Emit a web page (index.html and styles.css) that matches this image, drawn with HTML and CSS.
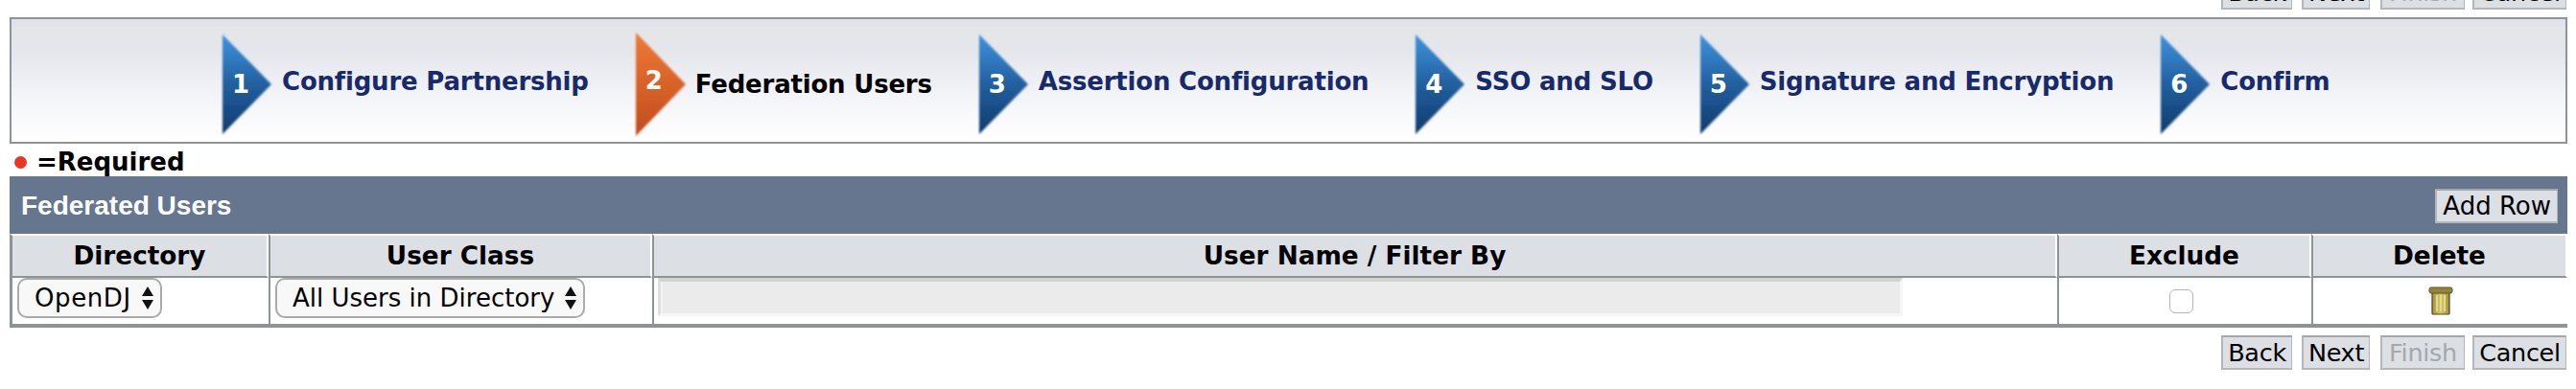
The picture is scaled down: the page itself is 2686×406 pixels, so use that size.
FILE: index.html
```html
<html>

<head>
    <link rel="stylesheet" href="styles.css">
</head>

<body>

    <div class="btnRow topBtns">
        <a class="btn btnBack">Back</a>
        <a class="btn btnNext">Next</a>
        <a class="btn btnFinish off">Finish</a>
        <a class="btn btnCancel">Cancel</a>
    </div>

    <div id="steps">
        <div class="step">
            <span class="arrow"><svg width="56" height="110" viewBox="0 0 56 110"><path d="M2 3 L53 55 L2 107 Z" fill="url(#blue)" filter="url(#soft)" /></svg><b>1</b></span>
            <span class="stepName">Configure Partnership</span>
        </div>
        <div class="step active">
            <span class="arrow"><svg width="56" height="110" viewBox="0 0 56 110"><path d="M2 1 L54 55 L2 109 Z" fill="url(#orange)" filter="url(#soft)" /></svg><b>2</b></span>
            <span class="stepName">Federation Users</span>
        </div>
        <div class="step">
            <span class="arrow"><svg width="56" height="110" viewBox="0 0 56 110"><path d="M2 3 L53 55 L2 107 Z" fill="url(#blue)" filter="url(#soft)" /></svg><b>3</b></span>
            <span class="stepName">Assertion Configuration</span>
        </div>
        <div class="step">
            <span class="arrow"><svg width="56" height="110" viewBox="0 0 56 110"><path d="M2 3 L53 55 L2 107 Z" fill="url(#blue)" filter="url(#soft)" /></svg><b>4</b></span>
            <span class="stepName">SSO and SLO</span>
        </div>
        <div class="step">
            <span class="arrow"><svg width="56" height="110" viewBox="0 0 56 110"><path d="M2 3 L53 55 L2 107 Z" fill="url(#blue)" filter="url(#soft)" /></svg><b>5</b></span>
            <span class="stepName">Signature and Encryption</span>
        </div>
        <div class="step">
            <span class="arrow"><svg width="56" height="110" viewBox="0 0 56 110"><path d="M2 3 L53 55 L2 107 Z" fill="url(#blue)" filter="url(#soft)" /></svg><b>6</b></span>
            <span class="stepName">Confirm</span>
        </div>
    </div>

    <div id="required"><i class="dot"></i><span>=Required</span></div>

    <div id="panel">
        <div id="panelHead">
            <h2>Federated Users</h2>
            <a class="btn addRow">Add Row</a>
        </div>
        <table id="users">
            <tr>
                <th class="colDir">Directory</th>
                <th class="colClass">User Class</th>
                <th class="colName">User Name / Filter By</th>
                <th class="colExcl">Exclude</th>
                <th class="colDel">Delete</th>
            </tr>
            <tr>
                <td>
                    <div class="select selDir"><span>OpenDJ</span><svg class="updown" width="12" height="26" viewBox="0 0 12 26"><path d="M6 1 L12 11 H0 Z M0 15 H12 L6 25 Z" /></svg></div>
                </td>
                <td>
                    <div class="select"><span>All Users in Directory</span><svg class="updown" width="12" height="26" viewBox="0 0 12 26"><path d="M6 1 L12 11 H0 Z M0 15 H12 L6 25 Z" /></svg></div>
                </td>
                <td><input class="filter" type="text" disabled></td>
                <td class="center"><i class="check"></i></td>
                <td class="center">
                    <svg class="trash" width="26" height="30" viewBox="0 0 26 30">
                        <rect x="4" y="5" width="18" height="24" rx="1" fill="url(#can)" stroke="#4f4825" stroke-width="1.2" />
                        <path d="M9 9 V26 M13 9 V26 M17 9 V26" stroke="#e6da86" stroke-width="2" />
                        <rect x="1" y="1" width="24" height="6" rx="2" fill="#958338" stroke="#5f5526" />
                    </svg>
                </td>
            </tr>
        </table>
    </div>

    <div class="btnRow botBtns">
        <a class="btn btnBack">Back</a>
        <a class="btn btnNext">Next</a>
        <a class="btn btnFinish off">Finish</a>
        <a class="btn btnCancel">Cancel</a>
    </div>

    <svg width="0" height="0" class="defs">
        <defs>
            <linearGradient id="blue" x1="0" y1="0" x2="0" y2="1">
                <stop offset="0" stop-color="#3f93df" />
                <stop offset="0.5" stop-color="#22609f" />
                <stop offset="1" stop-color="#0f3a6c" />
            </linearGradient>
            <linearGradient id="orange" x1="0" y1="0" x2="0" y2="1">
                <stop offset="0" stop-color="#ee7a35" />
                <stop offset="0.5" stop-color="#d9622a" />
                <stop offset="1" stop-color="#c04c1c" />
            </linearGradient>
            <linearGradient id="can" x1="0" y1="0" x2="1" y2="0">
                <stop offset="0" stop-color="#a2913f" />
                <stop offset="0.5" stop-color="#d6c96f" />
                <stop offset="1" stop-color="#a2913f" />
            </linearGradient>
            <filter id="soft"><feGaussianBlur stdDeviation="1" /></filter>
        </defs>
    </svg>
</body>

</html>
```

FILE: styles.css
```css
body {
    margin: 0;
    background: #fff;
    color: #000;
    font-family: 'DejaVu Sans', Verdana, sans-serif;
    font-size: 26px;
    overflow: hidden;
}

.defs {
    position: absolute;
}

/* buttons */
.btnRow {
    display: flex;
    justify-content: flex-end;
    margin-right: 10px;
}

.topBtns {
    margin-top: -26px;
}

.botBtns {
    margin-top: 8px;
}

.btn {
    display: block;
    height: 36px;
    line-height: 32px;
    box-sizing: border-box;
    background: #dcdfe4;
    border: 2px solid #b4b7ba;
    border-right-width: 1px;
    border-top-color: #a4a7a9;
    font-size: 25.5px;
    letter-spacing: -0.3px;
    text-align: center;
}

.btnBack {
    width: 74px;
}

.btnNext {
    width: 71px;
    margin-left: 10px;
}

.btnFinish {
    width: 88px;
    margin-left: 11px;
}

.btnCancel {
    width: 98px;
    margin-left: 8px;
}

.addRow {
    padding: 0 6px;
    font-size: 26px;
    letter-spacing: 0;
}

.btn.off {
    color: #a5a8ab;
}

/* wizard steps */
#steps {
    display: flex;
    align-items: center;
    gap: 47px;
    height: 132px;
    box-sizing: border-box;
    margin: 8px 9px 0 10px;
    padding: 7px 0 0 218px;
    border: 2px solid #8e9496;
    background: linear-gradient(#e1e2ec 0, #e1e2ec 6px, #e3e6e6 8px, #e5e6eb 25%, #f4f5f9 65%, #fff 100%);
}

.step {
    display: flex;
    align-items: center;
    gap: 8px;
}

.arrow {
    position: relative;
    display: block;
    width: 56px;
    height: 110px;
}

.arrow svg {
    display: block;
}

.arrow b {
    position: absolute;
    left: 12px;
    top: 40px;
    color: #fff;
    font-size: 26px;
    line-height: 30px;
}

.step.active .arrow b {
    top: 36px;
}

.stepName {
    font-size: 26px;
    font-weight: bold;
    color: #172a6c;
    margin-bottom: 5px;
    letter-spacing: -0.2px;
}

.step.active .stepName {
    color: #000;
    margin-bottom: 0;
}

/* required note */
#required {
    display: flex;
    align-items: center;
    height: 34px;
    box-sizing: border-box;
    padding: 4px 0 0 15px;
    font-weight: bold;
}

.dot {
    width: 13px;
    height: 13px;
    border-radius: 50%;
    background: #ee3524;
    margin-right: 10px;
}

/* panel */
#panel {
    margin: 0 9px 0 10px;
    background: #67768f;
}

#panelHead {
    display: flex;
    align-items: center;
    justify-content: space-between;
    height: 60px;
    padding: 2px 10px 0 12px;
    box-sizing: border-box;
}

#panelHead h2 {
    margin: 0;
    font-family: 'Liberation Sans', Arial, sans-serif;
    font-size: 28px;
    font-weight: bold;
    color: #fff;
}

#users {
    width: 100%;
    table-layout: fixed;
    border-collapse: separate;
    border-spacing: 0;
    border-bottom: 4px solid #8e9496;
    background: #fff;
}

#users th {
    height: 46px;
    box-sizing: border-box;
    padding: 0;
    background: #dcdfe4;
    border-top: 2px solid #fff;
    border-left: 2px solid #8e9496;
    border-right: 2px solid #fff;
    border-bottom: 2px solid #8e9496;
    font-size: 26.3px;
    text-align: center;
}

#users td {
    height: 48px;
    box-sizing: border-box;
    padding: 0;
    border-left: 2px solid #8e9496;
    vertical-align: top;
}

#users tr th:first-child,
#users tr td:first-child {
    border-left-width: 3px;
}

.colDir {
    width: 270px;
}

.colClass {
    width: 400px;
}

.colExcl {
    width: 265px;
}

.colDel {
    width: 267px;
}

.select {
    display: inline-flex;
    align-items: center;
    gap: 11px;
    height: 42px;
    box-sizing: border-box;
    margin-left: 5px;
    padding: 0 7px 0 16px;
    background: #f8f8f8;
    border: 2px solid #aaa;
    border-radius: 10px;
    font-size: 26px;
}

.selDir span {
    letter-spacing: 0.6px;
}

.updown {
    fill: #111;
}

.filter {
    display: block;
    width: 1298px;
    height: 40px;
    box-sizing: border-box;
    margin: 0 0 0 4px;
    background: #ebebeb;
    border-style: solid;
    border-width: 4px 3px 3px 3px;
    border-color: #d2d2d2 #f6f6f6 #f6f6f6 #dedede;
    box-shadow: inset 2px 0 0 #f4f4f4;
}

.center {
    text-align: center;
}

.check {
    display: block;
    width: 25px;
    height: 25px;
    box-sizing: border-box;
    margin: 12px 0 0 115px;
    background: #fff;
    border: 1px solid #b5b5b5;
    border-radius: 6px;
}

.trash {
    display: block;
    margin: 9px auto 0;
}
```
